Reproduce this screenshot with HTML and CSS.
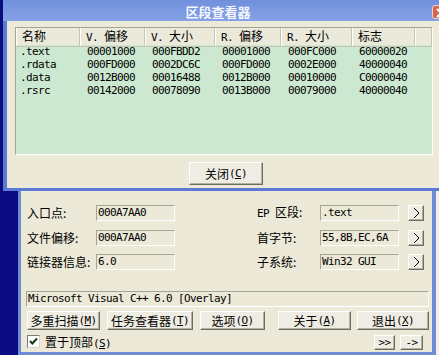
FILE: index.html
```html
<!DOCTYPE html>
<html>
<head>
<meta charset="utf-8">
<title>PEiD</title>
<link rel="stylesheet" href="styles.css">
</head>
<body>
<div class="desktop">
  <div class="edge"></div>

  <div class="win main">
    <div class="main-body">
      <div class="info">
        <div class="col left">
          <div class="row"><span class="lbl">入口点:</span><span class="field m">000A7AA0</span></div>
          <div class="row"><span class="lbl">文件偏移:</span><span class="field m">000A7AA0</span></div>
          <div class="row"><span class="lbl">链接器信息:</span><span class="field m">6.0</span></div>
        </div>
        <div class="col right">
          <div class="row"><span class="lbl2"><span class="m">EP </span>区段:</span><span class="field m">.text</span><span class="btn sq"><svg width="14" height="14" viewBox="0 0 14 14"><polyline points="5,2 10,7 5,12" fill="none" stroke="#000" stroke-width="1"/></svg></span></div>
          <div class="row"><span class="lbl2">首字节:</span><span class="field m">55,8B,EC,6A</span><span class="btn sq"><svg width="14" height="14" viewBox="0 0 14 14"><polyline points="5,2 10,7 5,12" fill="none" stroke="#000" stroke-width="1"/></svg></span></div>
          <div class="row"><span class="lbl2">子系统:</span><span class="field m">Win32 GUI</span><span class="btn sq"><svg width="14" height="14" viewBox="0 0 14 14"><polyline points="5,2 10,7 5,12" fill="none" stroke="#000" stroke-width="1"/></svg></span></div>
        </div>
      </div>
      <div class="field wide m">Microsoft Visual C++ 6.0 [Overlay]</div>
      <div class="btnrow">
        <span class="btn b1">多重扫描<span class="m">(<u>M</u>)</span></span>
        <span class="btn b2">任务查看器<span class="m">(<u>T</u>)</span></span>
        <span class="btn b3">选项<span class="m">(<u>O</u>)</span></span>
        <span class="btn b4">关于<span class="m">(<u>A</u>)</span></span>
        <span class="btn b5">退出<span class="m">(<u>X</u>)</span></span>
      </div>
      <div class="bottomrow">
        <span class="chk"><svg width="11" height="11" viewBox="0 0 11 11"><path d="M2 5 L4.3 7.5 L9 2.5" fill="none" stroke="#123a12" stroke-width="2"/></svg></span>
        <span class="chklbl">置于顶部<span class="m">(<u>S</u>)</span></span>
        <span class="btn small s1 m">&gt;&gt;</span>
        <span class="btn small s2 m">-&gt;</span>
      </div>
    </div>
  </div>

  <div class="win sect">
    <div class="titlebar">
      <span class="title">区段查看器</span>
      <span class="xbtn"><svg width="16" height="14" viewBox="0 0 16 14"><path d="M4 3 L12 11 M12 3 L4 11" stroke="#fff" stroke-width="2"/></svg></span>
    </div>
    <div class="sect-body">
      <div class="list">
        <div class="lhead">
          <div class="hc">名称</div>
          <div class="hc"><span class="m">V. </span>偏移</div>
          <div class="hc"><span class="m">V. </span>大小</div>
          <div class="hc"><span class="m">R. </span>偏移</div>
          <div class="hc"><span class="m">R. </span>大小</div>
          <div class="hc">标志</div>
          <div class="hc"></div>
        </div>
        <div class="lrow m"><span>.text</span><span>00001000</span><span>000FBDD2</span><span>00001000</span><span>000FC000</span><span>60000020</span></div>
        <div class="lrow m"><span>.rdata</span><span>000FD000</span><span>0002DC6C</span><span>000FD000</span><span>0002E000</span><span>40000040</span></div>
        <div class="lrow m"><span>.data</span><span>0012B000</span><span>00016488</span><span>0012B000</span><span>00010000</span><span>C0000040</span></div>
        <div class="lrow m"><span>.rsrc</span><span>00142000</span><span>00078090</span><span>0013B000</span><span>00079000</span><span>40000040</span></div>
      </div>
      <div class="closebar">
        <span class="btn closebtn">关闭<span class="m">(<u>C</u>)</span></span>
      </div>
    </div>
  </div>
</div>
</body>
</html>
```
FILE: styles.css
```css
* { box-sizing: border-box; }
html, body { margin: 0; padding: 0; }
body {
  width: 439px;
  height: 355px;
  overflow: hidden;
  background: #0b0c82;
  font-family: "Noto Sans CJK SC", "Liberation Sans", sans-serif;
  font-size: 12px;
  color: #000;
}
.desktop { position: relative; width: 439px; height: 355px; overflow: hidden; }
.m {
  font-family: "DejaVu Sans Mono", "Liberation Mono", monospace;
  font-size: 11px;
  letter-spacing: -0.62px;
}
u { text-decoration: underline; text-underline-offset: 1px; }
.edge {
  position: absolute;
  left: 436px;
  top: 190px;
  width: 3px;
  height: 165px;
  background: #f1efe6;
}

/* ---------- buttons & fields ---------- */
.btn {
  display: flex;
  align-items: center;
  justify-content: center;
  background: #efede3;
  border: 1px solid;
  border-color: #ffffff #6f6d62 #6f6d62 #ffffff;
  box-shadow: inset -1px -1px 0 #b4b1a2;
  white-space: nowrap;
  line-height: 1;
}
.field {
  display: block;
  height: 16px;
  width: 79px;
  background: #ece9d8;
  border: 1px solid;
  border-color: #a6a493 #ffffff #ffffff #a6a493;
  line-height: 14px;
  padding-left: 1px;
  white-space: nowrap;
  overflow: hidden;
}

/* ---------- main (PEiD) window ---------- */
.main {
  position: absolute;
  left: 18px;
  top: 188px;
  width: 418px;
  height: 167px;
  border: 3px solid #6e8cd4;
  border-right-width: 4px;
  background: #ece9d8;
}
.main-body { padding: 14px 0 0 6px; }
.info { display: flex; }
.col { display: flex; flex-direction: column; gap: 8.5px; }
.col.right { margin-left: 82px; }
.row { display: flex; align-items: center; height: 16px; }
.lbl { width: 69px; line-height: 16px; white-space: nowrap; }
.lbl2 { width: 63px; line-height: 16px; white-space: nowrap; }
.btn.sq { width: 16px; height: 16px; margin-left: 9px; }
.field.wide { width: 403px; margin: 21px 0 0 -1px; }

.btnrow { display: flex; height: 19px; margin-top: 4px; }
.btnrow .btn { height: 19px; }
.b1 { width: 73px; }
.b2 { width: 86px; margin-left: 7px; }
.b3 { width: 65px; margin-left: 7px; }
.b4 { width: 73px; margin-left: 13px; }
.b5 { width: 72px; margin-left: 6px; }

.bottomrow { display: flex; align-items: flex-start; height: 15px; margin-top: 5px; }
.chk {
  width: 13px;
  height: 13px;
  border: 1px solid;
  border-color: #7a7a7a #d8d6cc #d8d6cc #7a7a7a;
  background: #fff;
  display: flex;
  align-items: center;
  justify-content: center;
}
.chklbl { margin-left: 5px; line-height: 13px; }
.btn.small { height: 15px; font-size: 11px; }
.s1 { width: 21px; margin-left: auto; }
.s2 { width: 23px; margin-left: 5px; margin-right: 9px; }

/* ---------- section viewer window ---------- */
.sect {
  position: absolute;
  left: 3px;
  top: 0;
  width: 446px;
  height: 191px;
  background: #5a7ad4;
}
.titlebar {
  position: relative;
  height: 21px;
  background: linear-gradient(#7190dc, #86a1e5);
  color: #f4f7ff;
  font-weight: 700;
  font-size: 13px;
  line-height: 21px;
  padding: 1px 16px 0 0;
  text-align: center;
}
.xbtn {
  position: absolute;
  left: 429px;
  top: 5px;
  width: 18px;
  height: 14px;
  border-radius: 3px;
  border: 1px solid #f0d0c8;
  background: #d8654c;
  display: flex;
}
.sect-body {
  margin-left: 4px;
  height: 167px;
  background: #ece9d8;
  padding: 6px 0 0 8px;
}
.list {
  width: 418px;
  height: 128px;
  border: 1px solid;
  border-color: #a5a296 #ffffff #ffffff #a5a296;
  background: #cde8d0;
}
.lhead, .lrow {
  display: grid;
  grid-template-columns: 64px 65px 70px 66px 71px 63px 1fr;
}
.lhead { height: 17px; background: #ebe9da; }
.hc {
  border-right: 1px solid #c8c5b3;
  border-bottom: 1px solid #c8c5b3;
  box-shadow: inset 1px 0 0 #ffffff;
  padding-left: 6px;
  line-height: 16px;
  white-space: nowrap;
}
.lrow { height: 13px; line-height: 13px; }
.lrow span { padding-left: 7px; white-space: nowrap; }
.lrow span:first-child { padding-left: 4px; }

.closebar { width: 422px; display: flex; justify-content: center; margin-top: 7px; }
.closebtn { width: 74px; height: 23px; }
```
